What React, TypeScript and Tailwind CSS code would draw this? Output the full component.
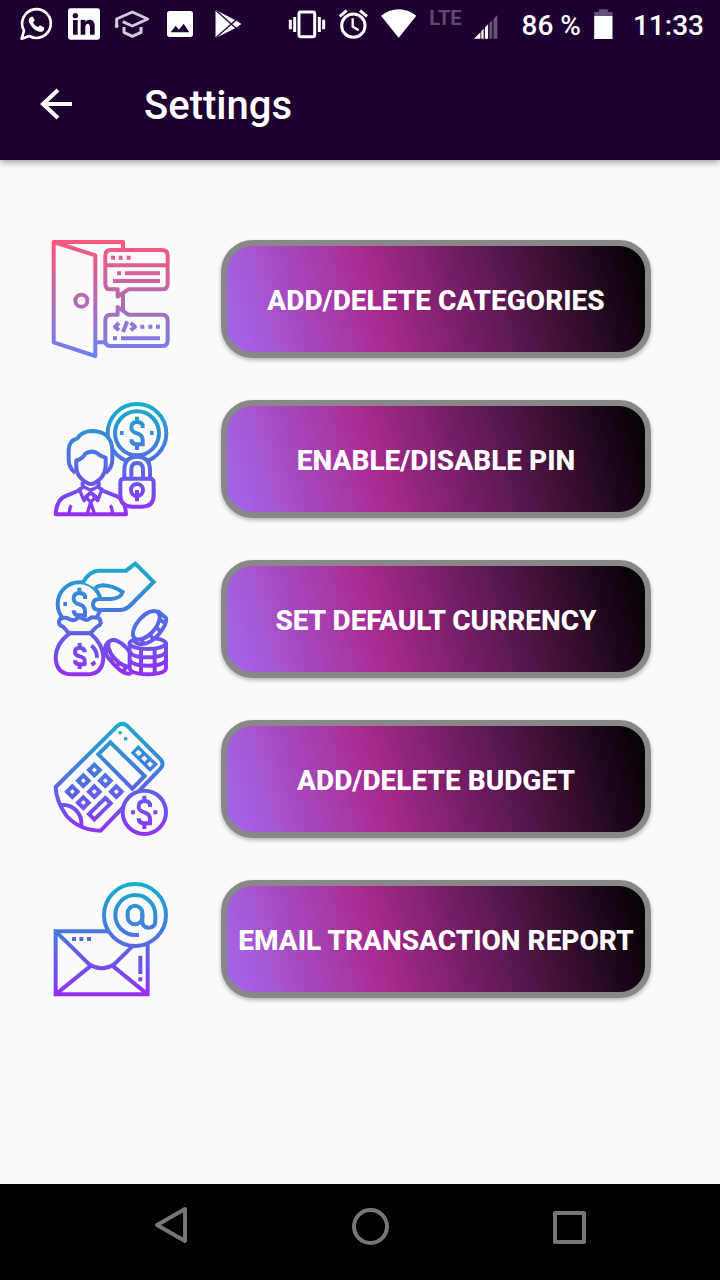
import type { ReactNode } from "react";

const PAPER = "#fafafa";

function StatusIcon({ box, className, children }: { box: string; className: string; children: ReactNode }) {
  return (
    <svg viewBox={box} className={`h-8 shrink-0 overflow-visible ${className}`} fill="none" aria-hidden="true">
      {children}
    </svg>
  );
}

function StatusBar() {
  return (
    <div className="flex h-12 items-center justify-between pr-4 pl-5 text-white">
      <div className="flex gap-4">
        <StatusIcon box="0 0 96 96" className="w-8">
          <path d="M5 92 L12 68 A43 43 0 1 1 28 84 Z" stroke="#fff" strokeWidth="8" strokeLinejoin="round" />
          <path
            d="M34 26 C27 29 24 36 28 44 C34 57 44 67 57 71 C66 73 73 69 73 59 L60 52 L54 58 C47 55 42 50 39 43 L44 37 L39 26 Z"
            fill="#fff"
          />
        </StatusIcon>
        <StatusIcon box="0 0 96 96" className="w-8">
          <path
            fillRule="evenodd"
            fill="#fff"
            d="M7 1 H89 Q96 1 96 8 V88 Q96 95 89 95 H7 Q0 95 0 88 V8 Q0 1 7 1 Z M15 36 V80 H29 V36 Z M22 15 A8 8 0 1 0 22 31 A8 8 0 1 0 22 15 Z M38 36 V80 H52 V58 C52 43 66 44 66 57 V80 H80 V53 C80 33 60 31 52 42 V36 Z"
          />
        </StatusIcon>
        <StatusIcon box="0 0 96 96" className="w-8">
          <g stroke="#d3cadb" strokeWidth="9" strokeLinejoin="round">
            <path d="M2 54 V33 L49 12 L95 33 L49 54 L20 41" />
            <path d="M24 57 V73 L49 85 L75 73 V57" />
          </g>
          <circle cx="2" cy="54" r="6" fill="#d3cadb" />
        </StatusIcon>
        <StatusIcon box="0 0 96 96" className="w-8">
          <path
            fillRule="evenodd"
            fill="#fff"
            d="M17 9 H79 Q87 9 87 17 V79 Q87 87 79 87 H17 Q9 87 9 79 V17 Q9 9 17 9 Z M20 73 H76 L59 47 L45 65 L35 53 Z"
          />
        </StatusIcon>
        <StatusIcon box="0 0 96 96" className="w-8">
          <path d="M12 8 L70 38 L86 48 L70 59 L12 88 Z" fill="#fff" stroke="#fff" strokeWidth="3" strokeLinejoin="round" />
          <path d="M13 8 L72 61 M13 88 L72 36" stroke="#1e0031" strokeWidth="4" />
        </StatusIcon>
      </div>
      <div className="flex items-center font-medium">
        <StatusIcon box="33 24 108 96" className="w-9">
          <rect x="63" y="36" width="47" height="74" rx="5" stroke="#fff" strokeWidth="9" />
          <path d="M50 51 V96 M124 51 V96" stroke="#fff" strokeWidth="9" />
          <path d="M37 59 V88 M137 59 V88" stroke="#fff" strokeWidth="9" />
        </StatusIcon>
        <StatusIcon box="177 24 90 96" className="ml-3 w-8">
          <circle cx="223" cy="77" r="35" stroke="#fff" strokeWidth="9" />
          <path d="M221 55 V80 L239 91" stroke="#fff" strokeWidth="7" />
          <path d="M182 49 L203 32 M243 32 L264 49" stroke="#fff" strokeWidth="9" />
        </StatusIcon>
        <StatusIcon box="306 24 108 96" className="ml-3 w-9">
          <path d="M306 47 Q359 9 412 47 L359 113 Z" fill="#fff" />
        </StatusIcon>
        <span className="ml-3 pb-3 text-xl leading-6 font-bold text-[#5f4a6e]">LTE</span>
        <StatusIcon box="579 24 75 96" className="ml-3 w-6">
          <path d="M579 118 L599 98 V118 Z" fill="#fff" />
          <path d="M602 118 V94 L609 87 V118 Z M613 118 V83 L623 73 V118 Z" fill="#fff" />
          <path d="M627 118 V69 L636 60 V118 Z M640 118 V56 L652 44 V118 Z" fill="#685378" />
        </StatusIcon>
        <span className="ml-6 pt-1 text-[28px] leading-8">86 %</span>
        <StatusIcon box="939 24 57 96" className="ml-3 w-5">
          <path d="M941 48 V36 H955 V28 H982 V36 H996 V48 Z" fill="#685378" />
          <path d="M941 48 H996 V117 H941 Z" fill="#fff" />
        </StatusIcon>
        <span className="ml-5 pt-1 text-[28px] leading-8">11:33</span>
      </div>
    </div>
  );
}

function RowIcon({ id, from, mid, to, children }: { id: string; from: string; mid: string; to: string; children: ReactNode }) {
  return (
    <svg viewBox="30 30 360 360" className="size-[120px] shrink-0" aria-hidden="true">
      <defs>
        <linearGradient id={id} gradientUnits="userSpaceOnUse" x1="0" y1="36" x2="0" y2="380">
          <stop offset="0" stopColor={from} />
          <stop offset="0.5" stopColor={mid} />
          <stop offset="1" stopColor={to} />
        </linearGradient>
      </defs>
      <g fill="none" stroke={`url(#${id})`} strokeWidth="12" strokeLinejoin="round">
        {children}
      </g>
    </svg>
  );
}

const cool = { from: "#14b0c8", mid: "#4f70e0", to: "#962df5" };
const warm = { from: "#fa587c", mid: "#b66ab0", to: "#6c80f5" };

function Dollar({ x, y }: { x: number; y: number }) {
  const p = (dx: number, dy: number) => `${x + dx} ${y + dy}`;
  return (
    <path
      strokeLinejoin="miter"
      d={`M${p(0, -50)} V${y - 34} M${p(17, -16)} V${y - 25} Q${p(13, -34)} ${p(0, -34)} Q${p(-17, -34)} ${p(-17, -17)} Q${p(-17, -5)} ${p(0, 0)} Q${p(17, 5)} ${p(17, 20)} V${y + 33} H${x - 5} Q${p(-17, 31)} ${p(-17, 18)} M${p(0, 33)} V${y + 50}`}
    />
  );
}

function DoorIcon() {
  return (
    <RowIcon id="door" {...warm}>
      <path d="M41 36 H249 V60 M249 188 V246 M166 337 H196" />
      <path d="M41 36 L166 76 V378 L41 337 Z" />
      <circle cx="124" cy="212" r="18" />
      <path d="M212 60 H366 Q383 60 383 77 V161 Q383 178 366 178 H265 L233 200 V178 H212 Q196 178 196 161 V77 Q196 60 212 60 Z" fill={PAPER} />
      <path d="M196 106 H383 M213 83 H225 M236 83 H248 M260 83 H272 M231 130 H243 M255 130 H360 M219 153 H360" />
      <path d="M212 254 H233 V231 L265 254 H366 Q383 254 383 271 V332 Q383 348 366 348 H212 Q196 348 196 332 V271 Q196 254 212 254 Z" fill={PAPER} />
      <path d="M237 279 L225 290 L237 301 M262 274 L249 306 M272 279 L285 290 L272 301" />
      <path d="M301 290 H313 M325 290 H337 M348 290 H360 M219 325 H231 M243 325 H360" />
    </RowIcon>
  );
}

function PersonIcon() {
  return (
    <RowIcon id="person" {...cool}>
      <circle cx="291" cy="130" r="88" />
      <circle cx="291" cy="130" r="66" />
      <Dollar x={291} y={130} />
      <path d="M240 129 H251 M330 129 H341" />
      <path
        d="M106 249 Q86 234 86 208 V180 Q86 153 112 145 Q126 124 154 123 Q184 123 200 137 Q217 152 217 184 V208 Q217 234 197 249"
        fill={PAPER}
      />
      <path d="M109 211 Q126 208 136 191 Q158 178 176 193 Q185 200 197 203 V229 Q195 262 164 279 Q153 285 142 279 Q111 262 109 235 Z" />
      <path d="M128 275 V291 L113 303 L73 320 Q50 331 47 373 H258 Q256 331 233 320 L190 303 L176 291 V275" />
      <path d="M128 289 L152 301 L176 289 M119 300 L132 332 L152 307 L173 332 L185 300 M152 307 L137 320 L152 337 L168 320 Z M152 337 L141 373 M152 337 L164 373 M94 346 Q88 354 88 373 M211 346 Q217 354 217 373" strokeWidth="10" />
      <path d="M253 268 V240 Q253 200 291 200 Q330 200 330 240 V268" fill={PAPER} />
      <path d="M274 266 V239 Q274 219 291 219 Q309 219 309 239 V266" />
      <path d="M252 266 H330 Q341 266 341 277 V316 Q341 350 307 350 H276 Q241 350 241 316 V277 Q241 266 252 266 Z" fill={PAPER} />
      <circle cx="291" cy="300" r="18" />
      <path d="M291 300 V334" />
    </RowIcon>
  );
}

function CurrencyIcon() {
  return (
    <RowIcon id="currency" {...cool}>
      <circle cx="118" cy="162" r="65" />
      <Dollar x={118} y={163} />
      <path d="M70 162 H81" />
      <path
        d="M130 96 Q149 62 177 62 H258 L286 41 L341 96 L272 165 Q257 180 239 180 H175 Q159 179 159 163 Q160 147 178 147 H214 Q242 145 248 126 Q216 106 188 106 Q175 108 165 113"
        fill={PAPER}
        strokeLinejoin="miter"
      />
      <path
        d="M72 203 C52 203 54 225 65 228 C74 230 77 242 88 250 H151 C161 241 166 231 174 228 C187 223 184 201 165 203 C148 198 151 210 139 210 C126 208 127 199 116 203 C103 208 107 213 96 210 C84 208 86 202 72 203 Z"
        fill={PAPER}
      />
      <path d="M88 250 Q48 282 47 320 Q47 373 98 373 H139 Q190 373 190 320 Q188 282 151 250 Z" fill={PAPER} />
      <path d="M119 279 V293 M134 307 Q134 293 119 293 Q105 293 105 306 Q105 316 119 319 Q134 322 134 333 V343 H116 Q105 342 105 331 M119 343 V357 M154 287 Q171 300 171 323 M166 337 L154 344" />
      <g fill={PAPER}>
        <path d="M205 276 C190 290 192 310 211 331 C230 354 253 374 269 371 L288 357 L225 270 Z" />
        <ellipse cx="242" cy="310" rx="49" ry="24" transform="rotate(48 242 310)" />
      </g>
      <path d="M195 309 L211 295 M208 331 L224 319 M226 350 L242 338 M246 366 L260 351" />
      <path d="M269 280 V353 Q269 371 323 373 Q378 371 378 353 V280 Z" fill={PAPER} />
      <ellipse cx="323" cy="280" rx="54" ry="17" fill={PAPER} />
      <path d="M269 306 Q278 322 323 322 Q368 322 378 306 M269 331 Q278 347 323 347 Q368 347 378 331 M303 296 V371 M344 296 V371" />
      <g fill={PAPER}>
        <path d="M283 264 Q278 278 298 282 Q328 286 357 252 Q383 219 378 204 L356 185 Z" />
        <ellipse cx="319" cy="226" rx="52" ry="27" transform="rotate(-48 319 226)" />
      </g>
      <path d="M303 265 L311 281 M328 252 L340 267 M347 230 L360 243 M358 208 L373 218" />
    </RowIcon>
  );
}

const keys = [
  [163, 180],
  [130, 212],
  [196, 212],
  [97, 245],
  [163, 245],
  [229, 245],
  [130, 278],
];

function BudgetIcon() {
  return (
    <RowIcon id="budget" {...cool}>
      <path d="M233 47 Q247 36 261 47 L362 148 Q373 161 362 175 L182 362 Q119 361 80 318 Q48 273 47 231 Z" />
      <g strokeLinejoin="miter">
        <path d="M211 97 L175 133 L277 236 L314 198 Z" />
        {keys.map(([x, y]) => (
          <path key={`${x}-${y}`} d={`M${x} ${y - 16} L${x + 16} ${y} L${x} ${y + 16} L${x - 16} ${y} Z`} />
        ))}
        <path d="M196 264 L212 280 L163 328 L147 312 Z" />
        <path d="M295 112 L347 163 L330 179 L279 128 Z M313 130 L296 146 M330 147 L313 163" strokeWidth="10" />
      </g>
      <path d="M236 68 H245 M252 86 H262" strokeWidth="9" />
      <path d="M61 286 Q88 281 109 302 Q127 321 124 348" />
      <circle cx="313" cy="307" r="65" fill={PAPER} />
      <Dollar x={313} y={307} />
      <path d="M273 307 H285 M340 307 H352" />
    </RowIcon>
  );
}

function EmailIcon() {
  return (
    <RowIcon id="email" {...cool}>
      <g strokeLinejoin="miter">
        <path d="M47 184 H323 V373 H47 Z" />
        <path d="M47 184 L148 283 Q186 307 222 283 L323 184 M47 373 L153 287 M323 373 L217 287" />
      </g>
      <path d="M96 207 H108 M118 207 H130 M141 207 H153 M301 257 V312 M301 322 V334" />
      <circle cx="285" cy="135" r="93" fill={PAPER} />
      <path d="M297 195 H285 A60 60 0 1 1 346 134 V153 Q346 173 326 173 Q307 173 307 153 V132" />
      <rect x="263" y="107" width="44" height="56" rx="22" />
    </RowIcon>
  );
}

const options = [
  { label: "ADD/DELETE CATEGORIES", icon: <DoorIcon /> },
  { label: "ENABLE/DISABLE PIN", icon: <PersonIcon /> },
  { label: "SET DEFAULT CURRENCY", icon: <CurrencyIcon /> },
  { label: "ADD/DELETE BUDGET", icon: <BudgetIcon /> },
  { label: "EMAIL TRANSACTION REPORT", icon: <EmailIcon /> },
];

export default function App() {
  return (
    <div className="flex min-h-screen flex-col bg-[#fafafa] font-[Roboto,sans-serif]">
      <header className="bg-[#1e0031] shadow-[0_2px_7px_rgba(0,0,0,0.4)]">
        <StatusBar />
        <div className="flex h-28 items-center gap-16 px-8 text-white">
          <button type="button" aria-label="Back" className="size-12">
            <svg viewBox="0 0 48 48" className="size-12" fill="none" stroke="#fff" strokeWidth="4" aria-hidden="true">
              <path d="M40 24 H11 M26 10 L11 24 L26 38" />
            </svg>
          </button>
          <h1 className="pt-1 text-[40px] leading-12 font-medium">Settings</h1>
        </div>
      </header>

      <main className="flex-1 pt-20 pr-[69px] pb-10 pl-[50px]">
        <ul className="flex flex-col gap-10">
          {options.map(({ label, icon }) => (
            <li key={label} className="flex h-[120px] items-start gap-[51px]">
              {icon}
              <button
                type="button"
                className="h-[118px] flex-1 rounded-[32px] border-6 border-[#888888] bg-[linear-gradient(75deg,#a568ec_0%,#a82b92_36%,#000000_100%)] pt-1 text-[28px] leading-8 font-extrabold whitespace-nowrap text-white shadow-[0_2px_4px_rgba(0,0,0,0.3)]"
              >
                {label}
              </button>
            </li>
          ))}
        </ul>
      </main>

      <nav className="flex h-24 items-center justify-between bg-black pr-[133px] pb-3 pl-[153px]" aria-label="System">
        <button type="button" aria-label="Back">
          <svg viewBox="0 0 36 40" className="h-10 w-9" fill="none" stroke="#767676" strokeWidth="4" strokeLinejoin="round">
            <path d="M4 19 L32 3 V35 Z" />
          </svg>
        </button>
        <button type="button" aria-label="Home">
          <svg viewBox="0 0 36 40" className="h-10 w-9 overflow-visible" fill="none" stroke="#767676" strokeWidth="4">
            <circle cx="18.5" cy="20.5" r="16.5" />
          </svg>
        </button>
        <button type="button" aria-label="Recent apps">
          <svg viewBox="0 0 36 40" className="h-10 w-9" fill="none" stroke="#767676" strokeWidth="4" strokeLinejoin="round">
            <rect x="4" y="7" width="29" height="29" />
          </svg>
        </button>
      </nav>
    </div>
  );
}
